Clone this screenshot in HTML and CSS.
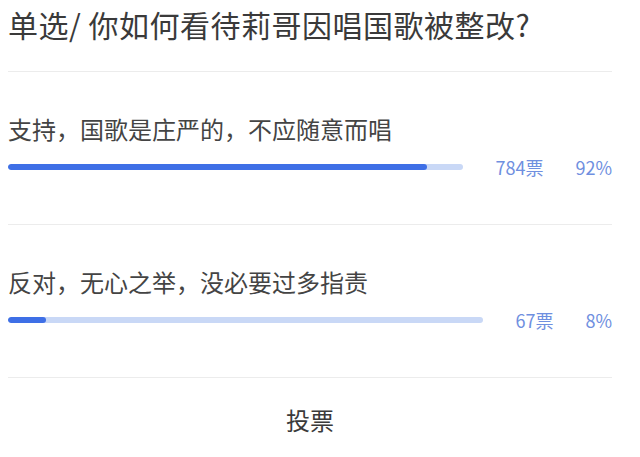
FILE: index.html
```html
<!DOCTYPE html>
<html lang="zh-CN">
<head>
  <meta charset="UTF-8">
  <meta name="viewport" content="width=device-width, initial-scale=1.0">
  <title>投票</title>
  <link rel="stylesheet" href="styles.css">
</head>
<body>
  <div class="poll">
    <h1 class="poll-title">单选/ 你如何看待莉哥因唱国歌被整改?</h1>

    <div class="option">
      <div class="option-text">支持，国歌是庄严的，不应随意而唱</div>
      <div class="option-stats">
        <div class="bar"><div class="bar-fill" style="width: 92%"></div></div>
        <span class="count">784票</span>
        <span class="percent">92%</span>
      </div>
    </div>

    <div class="option">
      <div class="option-text">反对，无心之举，没必要过多指责</div>
      <div class="option-stats">
        <div class="bar"><div class="bar-fill" style="width: 8%"></div></div>
        <span class="count">67票</span>
        <span class="percent">8%</span>
      </div>
    </div>

    <div class="vote">投票</div>
  </div>
</body>
</html>
```

FILE: styles.css
```css
/* General styles */
body {
  margin: 0;
  padding: 0;
  background: #fff;
  color: #3a3a3a;
  font-family: "Noto Sans CJK SC", "Noto Sans", sans-serif;
}

.poll {
  width: 604px;
  padding: 0 0 0 8px;
}

.poll-title {
  margin: 0;
  padding: 6px 0 29px;
  font-size: 30px;
  font-weight: normal;
  line-height: 36px;
  letter-spacing: 0.5px;
  color: #3a3a3a;
  border-bottom: 1px solid #ececec;
}

.option {
  padding: 41px 0 45px;
  border-bottom: 1px solid #ececec;
}

.option-text {
  font-size: 24px;
  line-height: 32px;
  color: #444;
}

.option-stats {
  display: flex;
  align-items: center;
  gap: 32px;
  margin-top: 10px;
  height: 24px;
  font-size: 18px;
  color: #6f8fe0;
}

.bar {
  flex: 1;
  height: 6px;
  border-radius: 3px;
  background: #c9d8f6;
  overflow: hidden;
}

.bar-fill {
  height: 100%;
  border-radius: 3px;
  background: #3e6fe6;
}

.vote {
  padding: 26px 0;
  text-align: center;
  font-size: 24px;
  line-height: 32px;
  color: #3a3a3a;
}
```
